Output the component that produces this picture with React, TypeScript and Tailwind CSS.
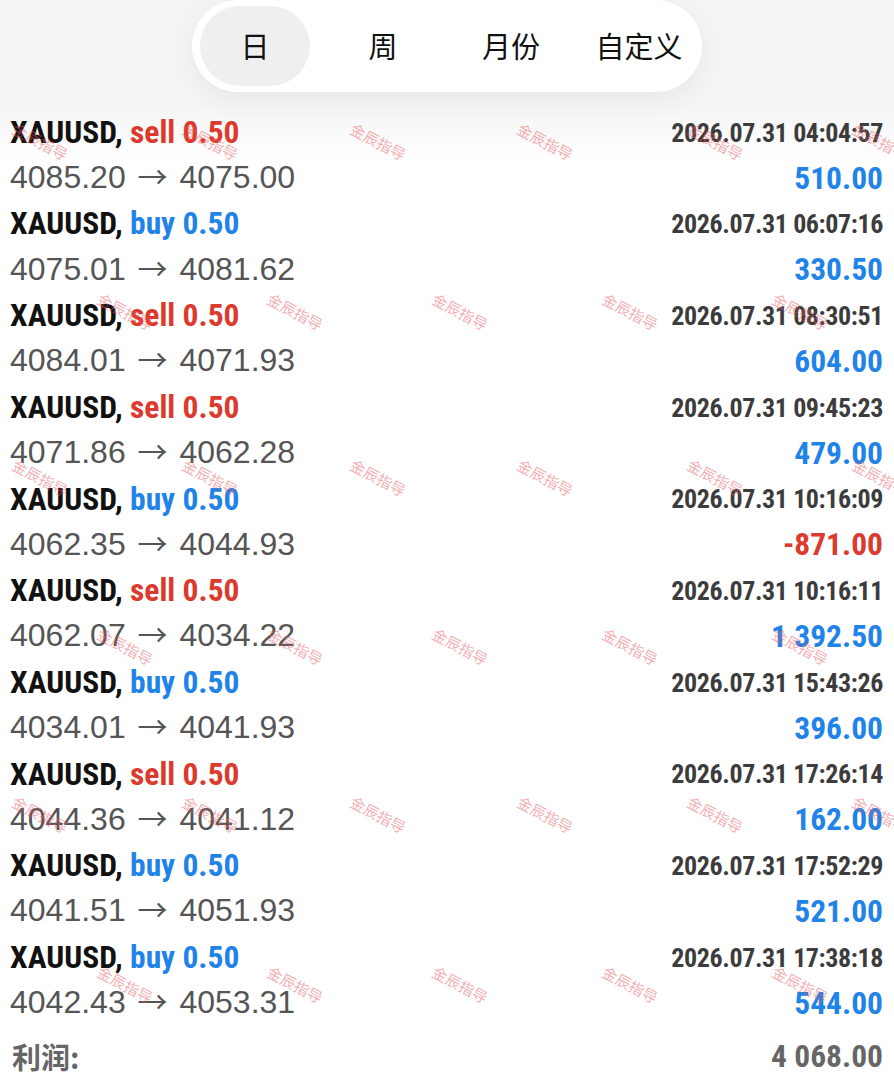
import React from "react";

type Trade = {
    side: "buy" | "sell",
    open: string,
    close: string,
    time: string,
    profit: string
}

const trades: Trade[] = [
    {side: "sell", open: "4085.20", close: "4075.00", time: "2026.07.31 04:04:57", profit: "510.00"},
    {side: "buy", open: "4075.01", close: "4081.62", time: "2026.07.31 06:07:16", profit: "330.50"},
    {side: "sell", open: "4084.01", close: "4071.93", time: "2026.07.31 08:30:51", profit: "604.00"},
    {side: "sell", open: "4071.86", close: "4062.28", time: "2026.07.31 09:45:23", profit: "479.00"},
    {side: "buy", open: "4062.35", close: "4044.93", time: "2026.07.31 10:16:09", profit: "-871.00"},
    {side: "sell", open: "4062.07", close: "4034.22", time: "2026.07.31 10:16:11", profit: "1 392.50"},
    {side: "buy", open: "4034.01", close: "4041.93", time: "2026.07.31 15:43:26", profit: "396.00"},
    {side: "sell", open: "4044.36", close: "4041.12", time: "2026.07.31 17:26:14", profit: "162.00"},
    {side: "buy", open: "4041.51", close: "4051.93", time: "2026.07.31 17:52:29", profit: "521.00"},
    {side: "buy", open: "4042.43", close: "4053.31", time: "2026.07.31 17:38:18", profit: "544.00"},
];

const tabs = ["日", "周", "月份", "自定义"];

const narrow = "font-['Liberation_Sans_Narrow','Roboto_Condensed','Liberation_Sans',sans-serif]";

// watermark grid: two staggered rows repeating
function watermarks() {
    let marks: {x: number, y: number}[] = [];
    let rowsY = [142, 312, 478, 647, 815, 985];
    rowsY.forEach((y, i) => {
        let xs = i % 2 == 0 ? [40, 210, 378, 545, 715, 880] : [125, 295, 460, 630, 800];
        xs.forEach(x => marks.push({x: x, y: y}));
    });
    return marks;
}

function TradeRow({t}: {t: Trade}) {
    let sideColor = t.side == "sell" ? "text-[#dc3a2e]" : "text-[#1f83e8]";
    let profitColor = t.profit.startsWith("-") ? "text-[#dc3a2e]" : "text-[#1f83e8]";
    return (
        <div>
            <div className="flex items-center justify-between h-[43px]">
                <span className={narrow + " font-bold text-[31.5px] leading-none text-[#111111]"}>
                    XAUUSD, <span className={sideColor}>{t.side} 0.50</span>
                </span>
                <span className={narrow + " font-bold text-[26px] tracking-[-0.4px] leading-none text-[#3c3c3c]"}>{t.time}</span>
            </div>
            <div className="flex items-center justify-between h-[48.7px]">
                <span className="font-['Liberation_Sans',sans-serif] text-[32px] leading-none text-[#555555] -mt-[4px]">
                    {t.open} <span className="font-['Noto_Sans_CJK_SC',sans-serif] text-[30px] mx-[3px]">→</span> {t.close}
                </span>
                <span className={narrow + " font-bold text-[31.5px] leading-none " + profitColor}>{t.profit}</span>
            </div>
        </div>
    );
}

export default function App() {
    return (
        <div className="relative w-[894px] h-[1080px] overflow-hidden bg-[linear-gradient(to_bottom,#f4f4f4_0px,#f5f5f5_105px,#ffffff_165px)]">
            <div className="flex justify-center h-[111px]">
                <div className="flex items-center gap-[18px] w-[510px] h-[92px] px-[8px] bg-white rounded-[46px] shadow-[0_8px_28px_rgba(0,0,0,0.06)]">
                    {tabs.map((tab, i) => (
                        <div key={tab} className={"flex items-center justify-center w-[110px] h-[80px] rounded-full text-[29px] text-[#111111] font-['Noto_Sans_CJK_SC',sans-serif] " + (i == 0 ? "bg-[#efefef]" : "")}>
                            {tab}
                        </div>
                    ))}
                </div>
            </div>
            <div className="pl-[10px] pr-[11px]">
                {trades.map((t, i) => <TradeRow key={i} t={t} />)}
                <div className="flex items-center justify-between h-[60px] -mt-[1px]">
                    <span className="font-['Noto_Sans_CJK_SC',sans-serif] font-bold text-[29px] leading-none text-[#666666] pl-[2px]">利润:</span>
                    <span className={narrow + " font-bold text-[31.5px] leading-none text-[#666666]"}>4 068.00</span>
                </div>
            </div>
            <div className="absolute inset-0 pointer-events-none">
                {watermarks().map((m, i) => (
                    <span key={i} className="absolute -translate-x-1/2 -translate-y-1/2 rotate-[28deg] whitespace-nowrap text-[15px] text-[rgba(232,90,95,0.5)] font-['Noto_Sans_CJK_SC',sans-serif]"
                        style={{left: m.x, top: m.y}}>
                        金辰指导
                    </span>
                ))}
            </div>
        </div>
    );
}
